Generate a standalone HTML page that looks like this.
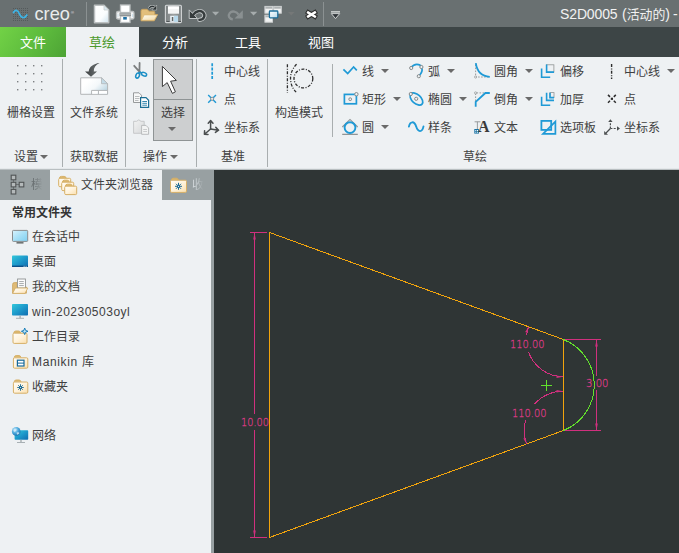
<!DOCTYPE html>
<html lang="zh-CN">
<head>
<meta charset="utf-8">
<title>S2D0005</title>
<style>
html,body{margin:0;padding:0;}
body{width:679px;height:553px;overflow:hidden;position:relative;background:#eef1f3;
 font-family:"Liberation Sans","Noto Sans CJK SC",sans-serif;font-size:12px;color:#404040;}
.a{position:absolute;}
.t{position:absolute;white-space:nowrap;line-height:16px;height:16px;font-size:12px;}
.sep{position:absolute;width:1px;background:#a9aeaf;}
.dd{position:absolute;width:0;height:0;border-left:4px solid transparent;border-right:4px solid transparent;border-top:4px solid #6a6a6a;}
svg{position:absolute;overflow:visible;}
#top{left:0;top:0;width:679px;height:27px;background:#697071;}
#tabs{left:0;top:27px;width:679px;height:30px;background:#3d4546;}
#ribbon{left:0;top:57px;width:679px;height:111px;background:#eef1f3;}
</style>
</head>
<body>
<!-- TOP BAR -->
<div id="top" class="a"></div>
<!-- TABS -->
<div id="tabs" class="a"></div>
<div class="a" style="left:0;top:27px;width:66px;height:30px;background:linear-gradient(125deg,#72d246 0%,#5dbb3d 55%,#4da335 100%);"></div>
<div class="a" style="left:66px;top:27px;width:73px;height:30px;background:#eef1f3;"></div>
<div class="t" style="left:20px;top:35px;font-size:13px;color:#fff;">文件</div>
<div class="t" style="left:89px;top:35px;font-size:13px;color:#4b9a2c;">草绘</div>
<div class="t" style="left:162px;top:35px;font-size:13px;color:#fff;">分析</div>
<div class="t" style="left:235px;top:35px;font-size:13px;color:#fff;">工具</div>
<div class="t" style="left:308px;top:35px;font-size:13px;color:#fff;">视图</div>
<!-- RIBBON -->
<div id="ribbon" class="a"></div>
<!-- separators -->
<div class="sep" style="left:62px;top:59px;height:108px;"></div>
<div class="sep" style="left:125px;top:59px;height:108px;"></div>
<div class="sep" style="left:196px;top:59px;height:108px;"></div>
<div class="sep" style="left:267px;top:59px;height:108px;"></div>
<div class="sep" style="left:332px;top:64px;height:73px;"></div>
<!-- group 1: 设置 -->
<svg style="left:14px;top:62px;" width="32" height="32" viewBox="0 0 32 32"><g fill="#7d8182">
<rect x="3" y="3" width="1.4" height="1.4"/><rect x="11" y="3" width="1.4" height="1.4"/><rect x="19" y="3" width="1.4" height="1.4"/><rect x="27" y="3" width="1.4" height="1.4"/>
<rect x="3" y="11" width="1.4" height="1.4"/><rect x="11" y="11" width="1.4" height="1.4"/><rect x="19" y="11" width="1.4" height="1.4"/><rect x="27" y="11" width="1.4" height="1.4"/>
<rect x="3" y="19" width="1.4" height="1.4"/><rect x="11" y="19" width="1.4" height="1.4"/><rect x="19" y="19" width="1.4" height="1.4"/><rect x="27" y="19" width="1.4" height="1.4"/>
<rect x="3" y="27" width="1.4" height="1.4"/><rect x="11" y="27" width="1.4" height="1.4"/><rect x="19" y="27" width="1.4" height="1.4"/><rect x="27" y="27" width="1.4" height="1.4"/>
</g></svg>
<div class="t" style="left:7px;top:105px;">栅格设置</div>
<div class="t" style="left:14px;top:149px;">设置</div><div class="dd" style="left:40px;top:155px;"></div>
<!-- group 2: 获取数据 -->
<div class="t" style="left:70px;top:105px;">文件系统</div>
<div class="t" style="left:70px;top:149px;">获取数据</div>
<!-- group 3: 操作 -->
<div class="a" style="left:153px;top:59px;width:40px;height:82px;background:#cdcfd0;border:1px solid #8f9495;box-sizing:border-box;"></div>
<div class="a" style="left:153px;top:99px;width:40px;height:1px;background:#8f9495;"></div>
<div class="t" style="left:161px;top:105px;">选择</div><div class="dd" style="left:168px;top:127px;"></div>
<div class="t" style="left:143px;top:149px;">操作</div><div class="dd" style="left:170px;top:155px;"></div>
<!-- group 4: 基准 -->
<div class="t" style="left:224px;top:64px;">中心线</div>
<div class="t" style="left:224px;top:92px;">点</div>
<div class="t" style="left:224px;top:120px;">坐标系</div>
<div class="t" style="left:221px;top:149px;">基准</div>
<!-- group 5 -->
<div class="t" style="left:275px;top:105px;">构造模式</div>
<!-- group 6: 草绘 -->
<div class="t" style="left:362px;top:64px;">线</div><div class="dd" style="left:381px;top:69px;"></div>
<div class="t" style="left:362px;top:92px;">矩形</div><div class="dd" style="left:393px;top:97px;"></div>
<div class="t" style="left:362px;top:120px;">圆</div><div class="dd" style="left:381px;top:125px;"></div>
<div class="t" style="left:428px;top:64px;">弧</div><div class="dd" style="left:447px;top:69px;"></div>
<div class="t" style="left:428px;top:92px;">椭圆</div><div class="dd" style="left:459px;top:97px;"></div>
<div class="t" style="left:428px;top:120px;">样条</div>
<div class="t" style="left:494px;top:64px;">圆角</div><div class="dd" style="left:525px;top:69px;"></div>
<div class="t" style="left:494px;top:92px;">倒角</div><div class="dd" style="left:525px;top:97px;"></div>
<div class="t" style="left:494px;top:120px;">文本</div>
<div class="t" style="left:560px;top:64px;">偏移</div>
<div class="t" style="left:560px;top:92px;">加厚</div>
<div class="t" style="left:560px;top:120px;">选项板</div>
<div class="t" style="left:624px;top:64px;">中心线</div><div class="dd" style="left:667px;top:69px;"></div>
<div class="t" style="left:624px;top:92px;">点</div>
<div class="t" style="left:624px;top:120px;">坐标系</div>
<div class="t" style="left:463px;top:149px;">草绘</div>

<!-- LEFT PANEL -->
<div class="a" style="left:0;top:168px;width:679px;height:1px;background:#e4e8ea;"></div><div class="a" style="left:0;top:169px;width:679px;height:1px;background:#b9bfc1;"></div>
<div class="a" style="left:0;top:170px;width:214px;height:30px;background:#98a0a2;"></div>
<div class="a" style="left:50px;top:170px;width:112px;height:30px;background:#eef1f3;"></div>
<div class="a" style="left:211px;top:200px;width:3px;height:353px;background:#98a0a2;"></div>
<div class="t" style="left:31px;top:177px;color:#6a7072;width:12px;overflow:hidden;-webkit-mask-image:linear-gradient(90deg,#000 20%,transparent 95%);mask-image:linear-gradient(90deg,#000 20%,transparent 95%);">模</div>
<div class="t" style="left:81px;top:177px;">文件夹浏览器</div>
<div class="t" style="left:192px;top:177px;color:#d2d8db;width:12px;overflow:hidden;-webkit-mask-image:linear-gradient(90deg,#000 20%,transparent 95%);mask-image:linear-gradient(90deg,#000 20%,transparent 95%);">收</div>
<div class="t" style="left:12px;top:205px;font-weight:bold;color:#333;">常用文件夹</div>
<div class="t" style="left:32px;top:229px;">在会话中</div>
<div class="t" style="left:32px;top:254px;">桌面</div>
<div class="t" style="left:32px;top:279px;">我的文档</div>
<div class="t" style="left:32px;top:304px;letter-spacing:0.5px;">win-20230503oyl</div>
<div class="t" style="left:32px;top:329px;">工作目录</div>
<div class="t" style="left:32px;top:354px;"><span style="letter-spacing:0.65px;">Manikin </span>库</div>
<div class="t" style="left:32px;top:379px;">收藏夹</div>
<div class="t" style="left:32px;top:428px;">网络</div>

<!-- CANVAS -->
<svg style="left:214px;top:170px;" width="465" height="383" viewBox="214 170 465 383">
<rect x="214" y="170" width="465" height="383" fill="#2f3535"/>
<g fill="none" stroke-width="1" shape-rendering="crispEdges">
<path d="M269.5 232.5 L563.5 339.5 L563.5 430.5 L269.5 537.5 Z" stroke="#f2a40c"/>
<path d="M563.5 339.5 A49 49 0 0 1 563.5 430.5" stroke="#62e02c"/>
<path d="M541 385.5 H552 M546.5 380 V391" stroke="#62e02c"/>
<g stroke="#d0307e">
<path d="M250 232.5 H267 M250 537.5 H267 M254.5 232 V414 M254.5 430 V537"/>
<path d="M565 339.5 H601 M565 430.5 H601 M596.5 339 V376 M596.5 390 V430"/>
<path d="M528.5 326.8 A37.2 37.2 0 0 0 526.6 335"/>
<path d="M528.5 352 A37.2 37.2 0 0 0 563.5 376.7"/>
<path d="M526.6 443.9 A39.3 39.3 0 0 1 525.6 420"/>
<path d="M534.5 404 A39.3 39.3 0 0 1 563.5 391.2"/>
</g>
</g>
<g fill="#d0307e" stroke="none">
<path d="M254.5 232.5 L253.2 239.5 H255.8 Z"/>
<path d="M254.5 537.5 L253.2 530.5 H255.8 Z"/>
<path d="M596.5 339.5 L595.2 346.5 H597.8 Z"/>
<path d="M596.5 430.5 L595.2 423.5 H597.8 Z"/>
<path d="M563 376.7 L556.5 375.4 V378 Z"/>
<path d="M563 391.2 L556.5 389.9 V392.5 Z"/>
<path d="M528.5 326.8 L525.2 332.1 L527.7 333 Z"/>
<path d="M526.6 443.9 L523.3 438.6 L525.8 437.7 Z"/>
</g>
<g fill="#dc3a85" stroke="#dc3a85" stroke-width="0.3" font-family="'DejaVu Sans Light','DejaVu Sans','Liberation Sans',sans-serif" font-weight="200" font-size="11">
<text x="241" y="426" textLength="28" lengthAdjust="spacingAndGlyphs">10.00</text>
<text x="510" y="348.3" textLength="34.5" lengthAdjust="spacingAndGlyphs">110.00</text>
<text x="512" y="417.3" textLength="34.5" lengthAdjust="spacingAndGlyphs">110.00</text>
<text x="586" y="387.2" textLength="22.5" lengthAdjust="spacingAndGlyphs">3.00</text>
</g>
</svg>

<!-- logo -->
<svg style="left:0;top:0;" width="345" height="27" viewBox="0 0 345 27">
<defs>
<linearGradient id="gpage" x1="0" y1="0" x2="1" y2="1"><stop offset="0" stop-color="#ffffff"/><stop offset="0.6" stop-color="#fbfdfe"/><stop offset="1" stop-color="#cfe3ee"/></linearGradient>
<linearGradient id="gfold" x1="0" y1="0" x2="1" y2="1"><stop offset="0" stop-color="#fffdf5"/><stop offset="1" stop-color="#f3d9a4"/></linearGradient>
<linearGradient id="gfl" x1="0" y1="0" x2="1" y2="0"><stop offset="0" stop-color="#7c8182"/><stop offset="0.5" stop-color="#9da2a3"/><stop offset="1" stop-color="#7c8182"/></linearGradient>
<linearGradient id="gwin" x1="0" y1="0" x2="1" y2="1"><stop offset="0" stop-color="#ffffff"/><stop offset="1" stop-color="#b9d9ea"/></linearGradient>
</defs>
<g fill="#545a5b"><rect x="13" y="8" width="1" height="1"/><rect x="15" y="8" width="1" height="1"/><rect x="17" y="8" width="1" height="1"/><rect x="19" y="8" width="1" height="1"/><rect x="21" y="8" width="1" height="1"/><rect x="23" y="8" width="1" height="1"/><rect x="25" y="8" width="1" height="1"/><rect x="27" y="8" width="1" height="1"/><rect x="13" y="10" width="1" height="1"/><rect x="15" y="10" width="1" height="1"/><rect x="17" y="10" width="1" height="1"/><rect x="19" y="10" width="1" height="1"/><rect x="21" y="10" width="1" height="1"/><rect x="23" y="10" width="1" height="1"/><rect x="25" y="10" width="1" height="1"/><rect x="27" y="10" width="1" height="1"/><rect x="13" y="12" width="1" height="1"/><rect x="15" y="12" width="1" height="1"/><rect x="17" y="12" width="1" height="1"/><rect x="19" y="12" width="1" height="1"/><rect x="21" y="12" width="1" height="1"/><rect x="23" y="12" width="1" height="1"/><rect x="25" y="12" width="1" height="1"/><rect x="27" y="12" width="1" height="1"/><rect x="13" y="14" width="1" height="1"/><rect x="15" y="14" width="1" height="1"/><rect x="17" y="14" width="1" height="1"/><rect x="19" y="14" width="1" height="1"/><rect x="21" y="14" width="1" height="1"/><rect x="23" y="14" width="1" height="1"/><rect x="25" y="14" width="1" height="1"/><rect x="27" y="14" width="1" height="1"/><rect x="13" y="16" width="1" height="1"/><rect x="15" y="16" width="1" height="1"/><rect x="17" y="16" width="1" height="1"/><rect x="19" y="16" width="1" height="1"/><rect x="21" y="16" width="1" height="1"/><rect x="23" y="16" width="1" height="1"/><rect x="25" y="16" width="1" height="1"/><rect x="27" y="16" width="1" height="1"/><rect x="13" y="18" width="1" height="1"/><rect x="15" y="18" width="1" height="1"/><rect x="17" y="18" width="1" height="1"/><rect x="19" y="18" width="1" height="1"/><rect x="21" y="18" width="1" height="1"/><rect x="23" y="18" width="1" height="1"/><rect x="25" y="18" width="1" height="1"/><rect x="27" y="18" width="1" height="1"/><rect x="13" y="20" width="1" height="1"/><rect x="15" y="20" width="1" height="1"/><rect x="17" y="20" width="1" height="1"/><rect x="19" y="20" width="1" height="1"/><rect x="21" y="20" width="1" height="1"/><rect x="23" y="20" width="1" height="1"/><rect x="25" y="20" width="1" height="1"/><rect x="27" y="20" width="1" height="1"/></g>
<path d="M13.5 12.5 C15 9.5 17.5 9.5 19.5 14 C21.5 18.5 24.5 19 26.8 15" fill="none" stroke="#3eb4e6" stroke-width="1.8" stroke-linecap="round"/>
<!-- separators -->
<rect x="86" y="2" width="1" height="24" fill="#8b9192"/>
<rect x="323" y="2" width="1" height="24" fill="#8b9192"/>
<!-- new file -->
<path d="M94.5 5.3 H104 L108.7 10 V22.7 H94.5 Z" fill="url(#gpage)" stroke="#bcc0c1" stroke-width="1.5" stroke-linejoin="round"/>
<path d="M104 5.8 V10 H108.3" fill="#dbe9f1" stroke="#c9cdce" stroke-width="0.8"/>
<!-- printer -->
<rect x="116.5" y="11.5" width="17.5" height="7.5" rx="1.5" fill="#f4f5f5" stroke="#bcc0c1" stroke-width="1.3"/>
<rect x="120.5" y="5" width="9.5" height="7.5" fill="#ffffff" stroke="#bcc0c1" stroke-width="1.3"/>
<rect x="120.5" y="16" width="9.5" height="6.5" fill="#ffffff" stroke="#bcc0c1" stroke-width="1.3"/>
<rect x="119.5" y="12.8" width="11.5" height="3.3" fill="#8f9495"/>
<rect x="119.5" y="13.5" width="11.5" height="1.2" fill="#b8bcbd"/>
<rect x="123.2" y="17" width="3.6" height="2.6" fill="#1f6fa3"/>
<rect x="117.5" y="14" width="1" height="3" fill="#cfe3ee"/><rect x="132" y="14" width="1" height="3" fill="#cfe3ee"/>
<!-- open folder -->
<path d="M141 20.8 V11 Q141 9.3 142.6 9.3 H147 L149 11.2 H153.5 Q154.8 11.2 154.8 12.6 V14.5 H157.6 L154.3 20.8 Z" fill="#e3bf7c" stroke="#c9a25c" stroke-width="0.9" stroke-linejoin="round"/>
<path d="M144.2 15 H157.3 L154.2 20.3 H141.6 Z" fill="url(#gfold)" stroke="#d9b671" stroke-width="0.6"/>
<path d="M149.2 8.2 C150.5 5.8 153.5 5.6 154.8 7.6" fill="none" stroke="#d4d8d9" stroke-width="2.6"/>
<path d="M149.2 8.2 C150.5 5.8 153.5 5.6 154.8 7.6" fill="none" stroke="#2d3334" stroke-width="1.4"/>
<path d="M156.6 5 V10 H151.8 Z" fill="#2d3334" stroke="#d4d8d9" stroke-width="0.5"/>
<!-- save floppy -->
<rect x="165.4" y="5.2" width="16" height="17.4" rx="1" fill="url(#gfl)" stroke="#d3d6d7" stroke-width="1.1"/>
<rect x="168" y="6.5" width="11" height="7.2" fill="#f4f5f5"/>
<rect x="168" y="6.5" width="11" height="2.5" fill="#ffffff"/>
<rect x="170.2" y="15.8" width="7.8" height="6" fill="#e9f1f5"/>
<rect x="174" y="15.8" width="4" height="6" fill="#b7d9ec"/>
<rect x="171.8" y="17" width="1.5" height="4" fill="#5f6566"/>
<rect x="166.5" y="21" width="3" height="1" fill="#4f5556"/><rect x="178.5" y="21" width="2.5" height="1" fill="#4f5556"/>
<!-- undo -->
<path d="M193.6 14.4 C195.6 11 200.6 9.9 203.2 12.6 C205.8 15.4 204 19.6 199.4 19.9" fill="none" stroke="#c3c7c8" stroke-width="4.2" stroke-linecap="round"/>
<path d="M189.2 9.9 V18.5 H197.6 Z" fill="#363c3d" stroke="#c3c7c8" stroke-width="1" stroke-linejoin="round"/>
<path d="M193.6 14.4 C195.6 11 200.6 9.9 203.2 12.6 C205.8 15.4 204 19.6 199.4 19.9" fill="none" stroke="#363c3d" stroke-width="2.4" stroke-linecap="round"/>
<path d="M212 11.7 H219.2 L215.6 15.6 Z" fill="#a6acad"/>
<!-- redo (disabled) -->
<path d="M242.8 10.2 V18.6 H234.6 Z" fill="#8a9091"/>
<path d="M238.6 14.6 C236.6 11.4 232 10.4 229.8 13 C227.6 15.8 229 19 232.8 19.4" fill="none" stroke="#8a9091" stroke-width="2.3"/>
<path d="M250 11.7 H257.2 L253.6 15.6 Z" fill="#a6acad"/>
<!-- windows -->
<g fill="#f1f2f2" stroke="#cdd0d1" stroke-width="1">
<rect x="264.9" y="6.4" width="7.6" height="6.8"/><rect x="273.7" y="6.4" width="7.6" height="6.8"/><rect x="264.9" y="15.2" width="7.6" height="7"/>
</g>
<rect x="265.4" y="6.9" width="6.6" height="1.8" fill="#aeb3b4"/><rect x="274.2" y="6.9" width="6.6" height="1.8" fill="#aeb3b4"/><rect x="265.4" y="15.7" width="6.6" height="1.6" fill="#aeb3b4"/>
<rect x="269.4" y="11" width="8.4" height="6.8" rx="0.8" fill="url(#gwin)" stroke="#1f6f9a" stroke-width="1.3"/>
<path d="M288 12 H294.6 L291.3 15.6 Z" fill="#757878"/>
<!-- close X -->
<path d="M308.2 12.5 L314.8 16.5 M314.8 12.5 L308.2 16.5" stroke="#2b2b2b" stroke-width="4.6" stroke-linecap="square"/>
<path d="M308.2 12.5 L314.8 16.5 M314.8 12.5 L308.2 16.5" stroke="#ffffff" stroke-width="2.6" stroke-linecap="square"/>
<!-- customize -->
<rect x="331" y="11.2" width="9" height="1.3" fill="#d9dddd"/>
<path d="M331.3 13.6 H339.7 L335.5 18.6 Z" fill="#30363a" stroke="#d9dddd" stroke-width="0.9" stroke-linejoin="round"/>
</svg>
<div class="t" style="left:34.5px;top:3px;font-size:18.2px;line-height:22px;height:22px;color:#e9ecec;font-family:'Liberation Sans',sans-serif;">creo<span style="font-size:4px;position:relative;top:-6.5px;left:1px;">®</span></div>
<div class="t" style="left:560px;top:4px;font-size:14px;line-height:20px;height:20px;color:#f2f2f2;letter-spacing:-0.12px;">S2D0005</div><div class="t" style="left:622px;top:4px;font-size:12.9px;line-height:20px;height:20px;color:#f2f2f2;"><span style="font-size:14px;">(</span>活动的<span style="font-size:14px;">)</span></div><div class="t" style="left:673px;top:4px;font-size:14px;line-height:20px;height:20px;color:#f2f2f2;">-</div>

<svg style="left:0;top:0;pointer-events:none;" width="679" height="200" viewBox="0 0 679 200">
<defs>
<linearGradient id="gfs" x1="0.2" y1="0.3" x2="1" y2="0.8"><stop offset="0" stop-color="#ffffff"/><stop offset="0.45" stop-color="#f4f8fa"/><stop offset="1" stop-color="#b5d2e0"/></linearGradient>
<linearGradient id="garr" x1="0" y1="0" x2="1" y2="0"><stop offset="0" stop-color="#3b3f40"/><stop offset="0.6" stop-color="#5d6263"/><stop offset="1" stop-color="#45494a"/></linearGradient>
<linearGradient id="gclip" x1="0" y1="0" x2="1" y2="1"><stop offset="0" stop-color="#f3f4f4"/><stop offset="1" stop-color="#d6d8d9"/></linearGradient>
</defs>
<!-- file system icon -->
<path d="M80.7 77.8 H101.5 L107.6 83.7 V94.3 H80.7 Z" fill="url(#gfs)" stroke="#b3b6b7" stroke-width="1"/>
<path d="M101.5 77.8 V83.7 H107.6 Z" fill="#c3dbe7" stroke="#b3b6b7" stroke-width="0.8"/>
<path d="M91.6 94.3 V90.4 H107.6 M98.4 90.4 V94.3" fill="none" stroke="#b3b6b7" stroke-width="1"/>
<rect x="92.2" y="91" width="5.6" height="2.8" fill="#fff"/><rect x="99" y="91" width="8" height="2.8" fill="#fff"/>
<path d="M99.6 62.9 C93.5 63.6 89.2 66.5 88.7 71.4 L85 71.4 L91 76.8 L97 71.4 L93.8 71.4 C93.6 67.6 95.6 64.6 99.6 62.9 Z" fill="url(#garr)"/>
<!-- scissors -->
<path d="M134.2 65.8 L140.3 72.6 M139.6 63 L139.4 72.6" stroke="#7b7e7f" stroke-width="1.8" stroke-linecap="round" fill="none"/>
<ellipse cx="137.6" cy="75.6" rx="1.7" ry="2.6" transform="rotate(25 137.6 75.6)" fill="none" stroke="#1b8fc6" stroke-width="1.5"/>
<ellipse cx="144" cy="74.2" rx="2.7" ry="1.7" transform="rotate(20 144 74.2)" fill="none" stroke="#1b8fc6" stroke-width="1.5"/>
<path d="M139.6 72 L138.4 73.6 M139.8 72 L141.8 73.2" stroke="#1b8fc6" stroke-width="1.5" fill="none"/>
<!-- copy -->
<path d="M133.5 92.8 H139 L141.5 95.3 V102.5 H133.5 Z" fill="#f7f8f8" stroke="#8d9192" stroke-width="0.9"/>
<path d="M135 96.5 H139.5 M135 98.5 H139.5 M135 100.5 H138.5" stroke="#a9adae" stroke-width="0.8"/>
<path d="M140.6 97.7 H146 L148.6 100.3 V107.3 H140.6 Z" fill="#ffffff" stroke="#1b6e94" stroke-width="1.2"/>
<path d="M142.3 101.5 H147 M142.3 103.3 H147 M142.3 105.2 H147" stroke="#1f7ba6" stroke-width="0.9"/>
<!-- paste (disabled) -->
<path d="M133.6 121.3 H136.6 L138.8 119.8 L141 121.3 H144.2 V133.3 H133.6 Z" fill="url(#gclip)" stroke="#c3c5c6" stroke-width="0.9"/>
<path d="M141.6 125.4 H146 L148.6 128 V134.3 H141.6 Z" fill="#f3f4f4" stroke="#b4b7b8" stroke-width="0.9"/>
<path d="M143.2 129.5 H147 M143.2 131.5 H147" stroke="#bfc2c3" stroke-width="0.8"/>
<!-- select cursor -->
<path d="M162.4 66.4 V86.6 L167.2 82.6 L172.4 93.4 L175.4 91.8 L170.6 81.2 L176.4 80.4 Z" fill="#ffffff" stroke="#3c3c3c" stroke-width="1" stroke-linejoin="miter"/>
<!-- datum centerline -->
<path d="M212.2 63.2 V79" stroke="#1f9ad6" stroke-width="1.7" stroke-dasharray="3 1.3" fill="none"/>
<!-- datum point -->
<path d="M208.2 94.9 L216 102.7 M216 94.9 L208.2 102.7" stroke="#1f9ad6" stroke-width="1.4" fill="none"/>
<circle cx="212.1" cy="98.8" r="1.6" fill="#e6e9ea" stroke="#808485" stroke-width="0.8"/>
<!-- datum csys -->
<g stroke="#4a4e4f" stroke-width="1.5" fill="none" stroke-linecap="round" stroke-linejoin="round">
<path d="M210.6 129 V121 M208.2 123.3 L210.6 120.6 L213 123.3"/>
<path d="M210.6 129 L218.4 130.2 M215.8 127.4 L218.6 130.2 L215.4 132.4"/>
<path d="M210.6 129 L204.8 134 M204.6 130.8 L204.4 134.3 L208 134.4"/>
</g>
<!-- construction mode -->
<g stroke="#2c2c2c" stroke-width="1.3" fill="none" stroke-dasharray="3 1.5 1 1.5">
<path d="M287.4 64.3 V92.8"/>
<path d="M296.6 64.3 C288.5 72 288.5 85 296.6 92.6"/>
<circle cx="303.4" cy="78.5" r="9.4"/>
</g>
<!-- line -->
<path d="M343.4 69.3 L347.7 73.6 L353.6 67 L356.8 70.4" stroke="#1f9ad6" stroke-width="1.7" fill="none" stroke-linejoin="miter"/>
<!-- rectangle -->
<rect x="344.4" y="94.4" width="12" height="9.4" fill="none" stroke="#1f9ad6" stroke-width="1.7"/>
<circle cx="356.4" cy="94.2" r="1.7" fill="#eef1f3" stroke="#7c8081" stroke-width="0.9"/>
<circle cx="350.2" cy="99.2" r="1.4" fill="#eef1f3" stroke="#7c8081" stroke-width="0.9"/>
<!-- circle -->
<path d="M342.3 127 L350 119.4 L357.7 127 M342.2 134.4 H357.8" stroke="#909495" stroke-width="1.1" fill="none"/>
<circle cx="350" cy="127.6" r="5.4" fill="none" stroke="#1f9ad6" stroke-width="1.9"/>
<!-- arc -->
<path d="M411.4 67.4 C414 63.2 420 63.4 421.6 67.2 C422.6 70 421.4 73.6 418.8 76" stroke="#1f9ad6" stroke-width="1.7" fill="none"/>
<circle cx="411.2" cy="68" r="1.6" fill="#eef1f3" stroke="#7c8081" stroke-width="0.9"/>
<circle cx="421.4" cy="67" r="1.6" fill="#eef1f3" stroke="#7c8081" stroke-width="0.9"/>
<circle cx="418.8" cy="76.2" r="1.6" fill="#eef1f3" stroke="#7c8081" stroke-width="0.9"/>
<!-- ellipse -->
<ellipse cx="416.4" cy="99" rx="7.6" ry="4.4" transform="rotate(42 416.4 99)" fill="none" stroke="#1f9ad6" stroke-width="1.7"/>
<circle cx="410.8" cy="94" r="1.6" fill="#eef1f3" stroke="#7c8081" stroke-width="0.9"/>
<circle cx="416.2" cy="98.8" r="1.6" fill="#eef1f3" stroke="#7c8081" stroke-width="0.9"/>
<!-- spline -->
<path d="M408.9 126.6 C410 121.2 414.2 120.6 416.2 126.6 C418 132.6 422.2 132.6 423.5 126.4" stroke="#1f9ad6" stroke-width="1.9" fill="none" stroke-linecap="round"/>
<!-- fillet -->
<path d="M475.6 64.5 V77 H489" stroke="#8f9394" stroke-width="0.9" stroke-dasharray="1.6 1.4" fill="none"/>
<circle cx="475.6" cy="77" r="1.1" fill="#eef1f3" stroke="#8f9394" stroke-width="0.7"/>
<path d="M475.8 63.2 C477 71.6 482 76.4 489.8 76.8" stroke="#1f9ad6" stroke-width="1.8" fill="none"/>
<!-- chamfer -->
<path d="M475.6 101 V92.9 H485" stroke="#8f9394" stroke-width="0.9" stroke-dasharray="1.6 1.4" fill="none"/>
<circle cx="475.6" cy="92.9" r="1.1" fill="#eef1f3" stroke="#8f9394" stroke-width="0.7"/>
<path d="M475.7 106.8 V101.8 L485.4 93 H489.8" stroke="#1f9ad6" stroke-width="1.8" fill="none"/>
<!-- text icon -->
<path d="M474.6 121.8 H480.4 M477.4 121.8 V129" stroke="#8f9394" stroke-width="0.9" fill="none"/>
<rect x="474.3" y="129" width="4.6" height="4.6" fill="#1b74a6"/>
<rect x="475.3" y="130" width="1" height="1" fill="#fff"/><rect x="477" y="130" width="1" height="1" fill="#fff"/><rect x="475.3" y="131.7" width="1" height="1" fill="#fff"/><rect x="477" y="131.7" width="1" height="1" fill="#fff"/>
<text x="478" y="131.9" font-family="'Liberation Serif',serif" font-weight="bold" font-size="16" fill="#3a3a3a">A</text>
<!-- offset -->
<rect x="546.6" y="64.8" width="7.3" height="7.3" fill="none" stroke="#8f9394" stroke-width="0.8"/>
<path d="M546.6 64.6 V72.1 H554" stroke="#1f9ad6" stroke-width="1.6" fill="none"/>
<path d="M541.6 68.6 V77.2 H550.2" stroke="#1f9ad6" stroke-width="1.6" fill="none"/>
<!-- thicken -->
<rect x="550" y="92.6" width="4" height="5" fill="none" stroke="#8f9394" stroke-width="0.8"/>
<path d="M546.6 92.8 V100.4 H554 M550 92.8 V97.6 H554" stroke="#1f9ad6" stroke-width="1.6" fill="none"/>
<path d="M541.6 96.8 V105.3 H550.2" stroke="#1f9ad6" stroke-width="1.6" fill="none"/>
<!-- palette -->
<rect x="541.4" y="120.9" width="9.8" height="9" fill="none" stroke="#1f9ad6" stroke-width="1.8"/>
<path d="M555.4 121.6 V133.8 H543 Z" fill="none" stroke="#1f9ad6" stroke-width="1.7" stroke-linejoin="miter"/>
<!-- geometry centerline -->
<path d="M611.6 64 V79" stroke="#2c2c2c" stroke-width="1.4" stroke-dasharray="3 1.4 1 1.4" fill="none"/>
<!-- geometry point -->
<path d="M608 94.9 L610 96.9 M615.8 94.9 L613.8 96.9 M608 102.7 L610 100.7 M615.8 102.7 L613.8 100.7" stroke="#2c2c2c" stroke-width="1.5" fill="none"/>
<rect x="610.8" y="97.7" width="2.2" height="2.2" fill="#2c2c2c"/>
<!-- geometry csys -->
<g stroke="#4a4e4f" stroke-width="1.2" fill="#4a4e4f">
<path d="M610.4 128.5 V122" stroke-dasharray="2 1.3" fill="none"/>
<path d="M610.4 128.5 H617" stroke-dasharray="2 1.3" fill="none"/>
<path d="M610.4 128.5 L606 133" fill="none"/>
<path d="M608.2 122 L610.4 119.2 L612.6 122 Z" stroke="none"/>
<path d="M617 126.3 L620 128.5 L617 130.7 Z" stroke="none"/>
<path d="M604.2 131 L604.2 134.8 L608 134.8 Z" stroke="none"/>
</g>
</svg>

<svg style="left:0;top:168px;pointer-events:none;" width="214" height="385" viewBox="0 168 214 385">
<defs>
<linearGradient id="gfo" x1="0" y1="0" x2="1" y2="1"><stop offset="0" stop-color="#fffdf8"/><stop offset="0.5" stop-color="#fff3dc"/><stop offset="1" stop-color="#fadfae"/></linearGradient>
<linearGradient id="gmon" x1="0" y1="0" x2="1" y2="1"><stop offset="0" stop-color="#d9f3fd"/><stop offset="0.5" stop-color="#a6e0f7"/><stop offset="1" stop-color="#7fcff1"/></linearGradient>
<linearGradient id="gdesk" x1="0" y1="0" x2="1" y2="1"><stop offset="0" stop-color="#33c8da"/><stop offset="0.5" stop-color="#1d9acb"/><stop offset="1" stop-color="#0f6cb0"/></linearGradient>
<radialGradient id="gglobe" cx="0.35" cy="0.3" r="0.8"><stop offset="0" stop-color="#c9eafa"/><stop offset="0.5" stop-color="#4aa8dc"/><stop offset="1" stop-color="#1565a5"/></radialGradient>
</defs>
<!-- model tree icon -->
<g stroke="#6d7273" stroke-width="1" fill="none"><path d="M13.5 180 V189.5 M16 184.5 H19.5"/></g>
<g fill="#b4b9ba" stroke="#515556" stroke-width="1.1">
<rect x="11.2" y="175.2" width="4.6" height="4.6"/><rect x="11.2" y="182.3" width="4.6" height="4.6"/><rect x="19.2" y="182.3" width="4.6" height="4.6"/><rect x="11.2" y="189.4" width="4.6" height="4.6"/>
</g>
<!-- folder browser icon: 3 folders -->
<g stroke="#d6af66" stroke-width="1">
<path d="M59.4 178.2 Q59.6 176.4 61.4 176.4 H64.2 Q66 176.4 66.2 178.2" fill="#dcb96f"/>
<rect x="58.7" y="178.3" width="12" height="8.4" rx="1.2" fill="url(#gfo)"/>
<path d="M62.4 182 Q62.6 180.2 64.4 180.2 H67.2 Q69 180.2 69.2 182" fill="#dcb96f"/>
<rect x="61.7" y="182.2" width="12" height="8.4" rx="1.2" fill="url(#gfo)"/>
<path d="M65.4 186 Q65.6 184.2 67.4 184.2 H70.2 Q72 184.2 72.2 186" fill="#dcb96f"/>
<rect x="64.7" y="186.2" width="12" height="8.4" rx="1.2" fill="url(#gfo)"/>
</g>
<!-- favorites tab icon -->
<g stroke="#d6af66" stroke-width="1">
<path d="M171.4 180 Q171.6 178.2 173.4 178.2 H176.4 Q178 178.2 178.4 180" fill="#dcb96f"/>
<rect x="170.5" y="180.2" width="16" height="12.2" rx="1.2" fill="url(#gfo)"/>
</g>
<g stroke="#1a6a96" stroke-width="1" fill="none"><path d="M178.5 182.8 V189.8 M175 186.3 H182 M176 183.8 L181 188.8 M181 183.8 L176 188.8"/></g>
<circle cx="178.5" cy="186.3" r="1.5" fill="#1a6a96"/><circle cx="178.5" cy="186.3" r="0.6" fill="#fff"/>
<!-- in session: monitor -->
<rect x="12.5" y="230.4" width="15.2" height="11" rx="0.8" fill="url(#gmon)" stroke="#8a8d8e" stroke-width="1"/>
<rect x="16.5" y="242" width="7" height="1.6" fill="#707475"/>
<!-- desktop -->
<rect x="12" y="255.4" width="16" height="11.6" rx="0.8" fill="url(#gdesk)"/>
<rect x="12" y="265.6" width="16" height="1.4" fill="#0c4f88"/>
<rect x="23.6" y="265.8" width="1" height="1" fill="#bfe2f3"/><rect x="25.6" y="265.8" width="1" height="1" fill="#bfe2f3"/>
<!-- my documents -->
<path d="M12.6 293.2 V284.4 Q12.6 282.6 14.4 282.6 H17.2 V287 H26.4 V293.2 Z" fill="#dfbb76" stroke="#c9a25c" stroke-width="0.8"/>
<rect x="17.6" y="279" width="7.8" height="9" fill="#ffffff" stroke="#8d9192" stroke-width="0.9"/>
<path d="M19.2 281.6 H23.8 M19.2 283.6 H23.8 M19.2 285.6 H23.8" stroke="#8d9192" stroke-width="0.8"/>
<path d="M15.4 288 H27.8 L25 293.4 H12.6 Z" fill="url(#gfo)" stroke="#cfa961" stroke-width="0.8" stroke-linejoin="round"/>
<!-- computer -->
<rect x="12" y="304" width="16" height="11.6" rx="0.8" fill="url(#gdesk)"/>
<rect x="19.5" y="315.6" width="1.2" height="2.6" fill="#9aa2a6"/>
<rect x="16" y="317.8" width="8" height="1" fill="#a8b0b4"/>
<!-- working directory -->
<g stroke="#d6af66" stroke-width="1">
<path d="M13.8 333 Q14 331 15.8 331 H18.6 Q20.2 331 20.6 333" fill="#dcb96f"/>
<rect x="13" y="333.2" width="14" height="10.2" rx="1.2" fill="url(#gfo)"/>
</g>
<path d="M24.7 328 L25.6 330.4 L28 331.3 L25.6 332.2 L24.7 334.6 L23.8 332.2 L21.4 331.3 L23.8 330.4 Z" fill="#bfe3f6" stroke="#1a7fb8" stroke-width="1" stroke-linejoin="miter"/>
<!-- manikin -->
<g stroke="#d6af66" stroke-width="1">
<path d="M14.2 357.6 Q14.4 355.6 16.2 355.6 H19 Q20.6 355.6 21 357.6" fill="#dcb96f"/>
<rect x="13.4" y="357.8" width="14.4" height="10.4" rx="1.2" fill="url(#gfo)"/>
</g>
<rect x="17.4" y="360.2" width="6.6" height="5.8" fill="#ffffff" stroke="#16699b" stroke-width="1.2"/>
<rect x="17.4" y="362.6" width="6.6" height="1" fill="#16699b"/>
<!-- favorites -->
<g stroke="#d6af66" stroke-width="1">
<path d="M14.2 381.8 Q14.4 380 16.2 380 H19 Q20.6 380 21 381.8" fill="#dcb96f"/>
<rect x="13.4" y="382" width="14.4" height="11.2" rx="1.2" fill="url(#gfo)"/>
</g>
<g stroke="#1a6a96" stroke-width="0.9" fill="none"><path d="M20.5 384.2 V390.8 M17.2 387.5 H23.8 M18.2 385.2 L22.8 389.8 M22.8 385.2 L18.2 389.8"/></g>
<circle cx="20.5" cy="387.5" r="1.4" fill="#1a6a96"/><circle cx="20.5" cy="387.5" r="0.5" fill="#fff"/>
<!-- network -->
<rect x="14.6" y="430.2" width="13.6" height="9.6" rx="0.8" fill="url(#gdesk)"/>
<rect x="20.4" y="439.8" width="1.2" height="2.6" fill="#9aa2a6"/>
<rect x="17" y="442" width="8" height="1" fill="#a8b0b4"/>
<circle cx="16.2" cy="431.4" r="4.3" fill="url(#gglobe)"/>
<path d="M13.4 430 Q15 428.6 16.8 429.6 Q16.4 431.4 14.4 432 Z M16.6 432.6 Q18.6 431.6 19.6 433 Q18.6 434.8 17 434.8 Z" fill="#d9f0fb" opacity="0.8"/>
</svg>

</body>
</html>
